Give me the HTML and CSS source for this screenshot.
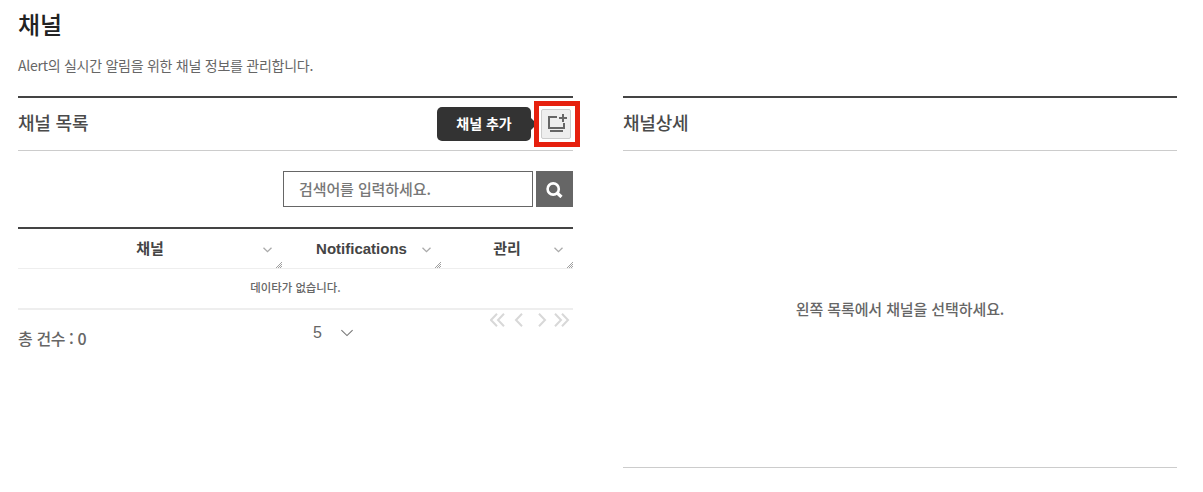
FILE: index.html
```
<!DOCTYPE html>
<html lang="ko">
<head>
    <meta charset="UTF-8">
    <meta name="viewport" content="width=device-width, initial-scale=1.0">
    <title>채널</title>
    <link rel="stylesheet" href="styles.css">
</head>
<body>
    <h1 class="title">채널</h1>
    <p class="desc">Alert의 실시간 알림을 위한 채널 정보를 관리합니다.</p>
    <div class="content">
        <div class="panel">
            <div class="panel-head">
                <h2>채널 목록</h2>
                <div class="add">
                    <span class="tooltip">채널 추가</span>
                    <div class="mark">
                        <button class="btn-add" aria-label="채널 추가">
                            <svg width="22" height="20" viewBox="0 0 22 20" fill="none" stroke="#666" stroke-width="2">
                                <path d="M12 3H4v11h15v-5M5 17h13M18 0v8M14 4h8"/>
                            </svg>
                        </button>
                    </div>
                </div>
            </div>
            <div class="search">
                <input type="text" placeholder="검색어를 입력하세요.">
                <button class="btn-search" aria-label="검색">
                    <svg width="18" height="18" viewBox="0 0 18 18" fill="none" stroke="#fff" stroke-width="2.6">
                        <circle cx="7.2" cy="9" r="5.6"/>
                        <path d="M11.2 13l4.3 4" stroke-width="3.2"/>
                    </svg>
                </button>
            </div>
            <div class="table">
                <div class="row head">
                    <div class="cell">
                        <span>채널</span>
                        <svg class="arrow" width="9" height="6" viewBox="0 0 9 6"><path d="M.5.7l4 4 4-4"/></svg>
                        <svg class="grip" width="6" height="6" viewBox="0 0 6 6"><path d="M0 6l6-6M2 6l4-4M4 6l2-2"/></svg>
                    </div>
                    <div class="cell">
                        <span>Notifications</span>
                        <svg class="arrow" width="9" height="6" viewBox="0 0 9 6"><path d="M.5.7l4 4 4-4"/></svg>
                        <svg class="grip" width="6" height="6" viewBox="0 0 6 6"><path d="M0 6l6-6M2 6l4-4M4 6l2-2"/></svg>
                    </div>
                    <div class="cell">
                        <span>관리</span>
                        <svg class="arrow" width="9" height="6" viewBox="0 0 9 6"><path d="M.5.7l4 4 4-4"/></svg>
                        <svg class="grip" width="6" height="6" viewBox="0 0 6 6"><path d="M0 6l6-6M2 6l4-4M4 6l2-2"/></svg>
                    </div>
                </div>
                <div class="empty">데이타가 없습니다.</div>
            </div>
            <div class="foot">
                <div class="total">총 건수 : 0</div>
                <div class="size">
                    <span>5</span>
                    <svg width="12" height="8" viewBox="0 0 12 8" fill="none" stroke="#777" stroke-width="1.1"><path d="M.4 1.1L6 6.6l5.6-5.5"/></svg>
                </div>
                <div class="paging">
                    <svg width="80" height="14" viewBox="0 0 80 14" fill="none" stroke="#d8d8d8" stroke-width="2">
                        <path d="M7 .8L1 7l6 6.2M14 .8L8 7l6 6.2"/>
                        <path d="M32 .8L26 7l6 6.2"/>
                        <path d="M49 .8L55 7l-6 6.2"/>
                        <path d="M65 .8L71 7l-6 6.2M72 .8L78 7l-6 6.2"/>
                    </svg>
                </div>
            </div>
        </div>
        <div class="panel">
            <div class="panel-head">
                <h2>채널상세</h2>
            </div>
            <div class="detail">왼쪽 목록에서 채널을 선택하세요.</div>
        </div>
    </div>
</body>
</html>
```

FILE: styles.css
```
* {
    box-sizing: border-box;
}
body {
    margin: 0;
    padding: 8px 26px 0 18px;
    background-color: #fff;
    color: #666;
    font-family: "Noto Sans CJK KR", sans-serif;
    font-size: 15px;
    font-weight: 500;
}
button {
    display: flex;
    align-items: center;
    justify-content: center;
    padding: 0;
    border: 0;
}
.title {
    margin: 0;
    height: 34px;
    line-height: 32px;
    font-size: 24px;
    font-weight: 500;
    color: #222;
}
.desc {
    margin: 13px 0 0;
    height: 20px;
    line-height: 20px;
    font-size: 14px;
    font-weight: 400;
    letter-spacing: -0.26px;
}
.content {
    display: grid;
    grid-template-columns: 555px 554px;
    column-gap: 50px;
    margin-top: 21px;
}
.panel {
    border-top: 2px solid #444;
}
.panel-head {
    display: flex;
    justify-content: space-between;
    height: 53px;
    border-bottom: 1px solid #ccc;
}
.panel-head h2 {
    margin: 0;
    line-height: 48px;
    font-size: 18px;
    font-weight: 500;
    letter-spacing: -0.2px;
    color: #4a4a4a;
}
.add {
    position: relative;
}
.mark {
    position: absolute;
    top: 3px;
    right: -7px;
    width: 46px;
    height: 46px;
    padding: 3px 2px;
    border: 5px solid #e6200e;
    background-color: #fff;
}
.btn-add {
    width: 30px;
    height: 30px;
    border: 1px solid #ccc;
    border-radius: 2px;
    background-color: #eee;
}
.tooltip {
    position: absolute;
    top: 9px;
    right: 42px;
    width: 94px;
    height: 34px;
    border-radius: 5px;
    background-color: #333;
    color: #fff;
    font-size: 14px;
    font-weight: 700;
    line-height: 32px;
    text-align: center;
}
.tooltip::after {
    content: "";
    position: absolute;
    top: 11px;
    left: 94px;
    border: 6px solid transparent;
    border-left-color: #333;
}
.search {
    display: flex;
    justify-content: flex-end;
    gap: 3px;
    margin-top: 20px;
}
.search input {
    width: 250px;
    height: 36px;
    padding: 0 15px 2px;
    border: 1px solid #666;
    font: inherit;
    letter-spacing: -0.1px;
}
.search input::placeholder {
    color: #777;
}
.btn-search {
    width: 37px;
    height: 36px;
    background-color: #666;
}
.table {
    margin-top: 20px;
    border-top: 2px solid #444;
    border-bottom: 2px solid #eee;
}
.row {
    display: grid;
    grid-template-columns: 264px 159px 132px;
    height: 40px;
    border-bottom: 1px solid #eee;
}
.cell {
    position: relative;
    line-height: 39px;
    text-align: center;
    font-family: "Liberation Sans", "Noto Sans CJK KR", sans-serif;
    font-weight: 700;
    color: #444;
}
.arrow,
.grip {
    position: absolute;
    fill: none;
    stroke: #aaa;
}
.arrow {
    top: 18px;
    right: 10px;
    stroke-width: 1.3;
}
.grip {
    right: 0;
    bottom: 0;
    stroke: #888;
    stroke-width: 0.8;
}
.empty {
    height: 39px;
    line-height: 36px;
    font-size: 11.4px;
    text-align: center;
}
.foot {
    display: grid;
    grid-template-columns: 295px 177px 1fr;
}
.total {
    padding-top: 16px;
    font-size: 16px;
    line-height: 24px;
    letter-spacing: -0.4px;
}
.size {
    display: flex;
    align-items: center;
    gap: 19px;
    height: 46px;
    font-family: "Liberation Sans", sans-serif;
    font-size: 16px;
}
.paging {
    padding-top: 3px;
}
.paging svg {
    display: block;
}
.detail {
    height: 317px;
    border-bottom: 1px solid #ccc;
    line-height: 315px;
    letter-spacing: -0.1px;
    text-align: center;
}
```
